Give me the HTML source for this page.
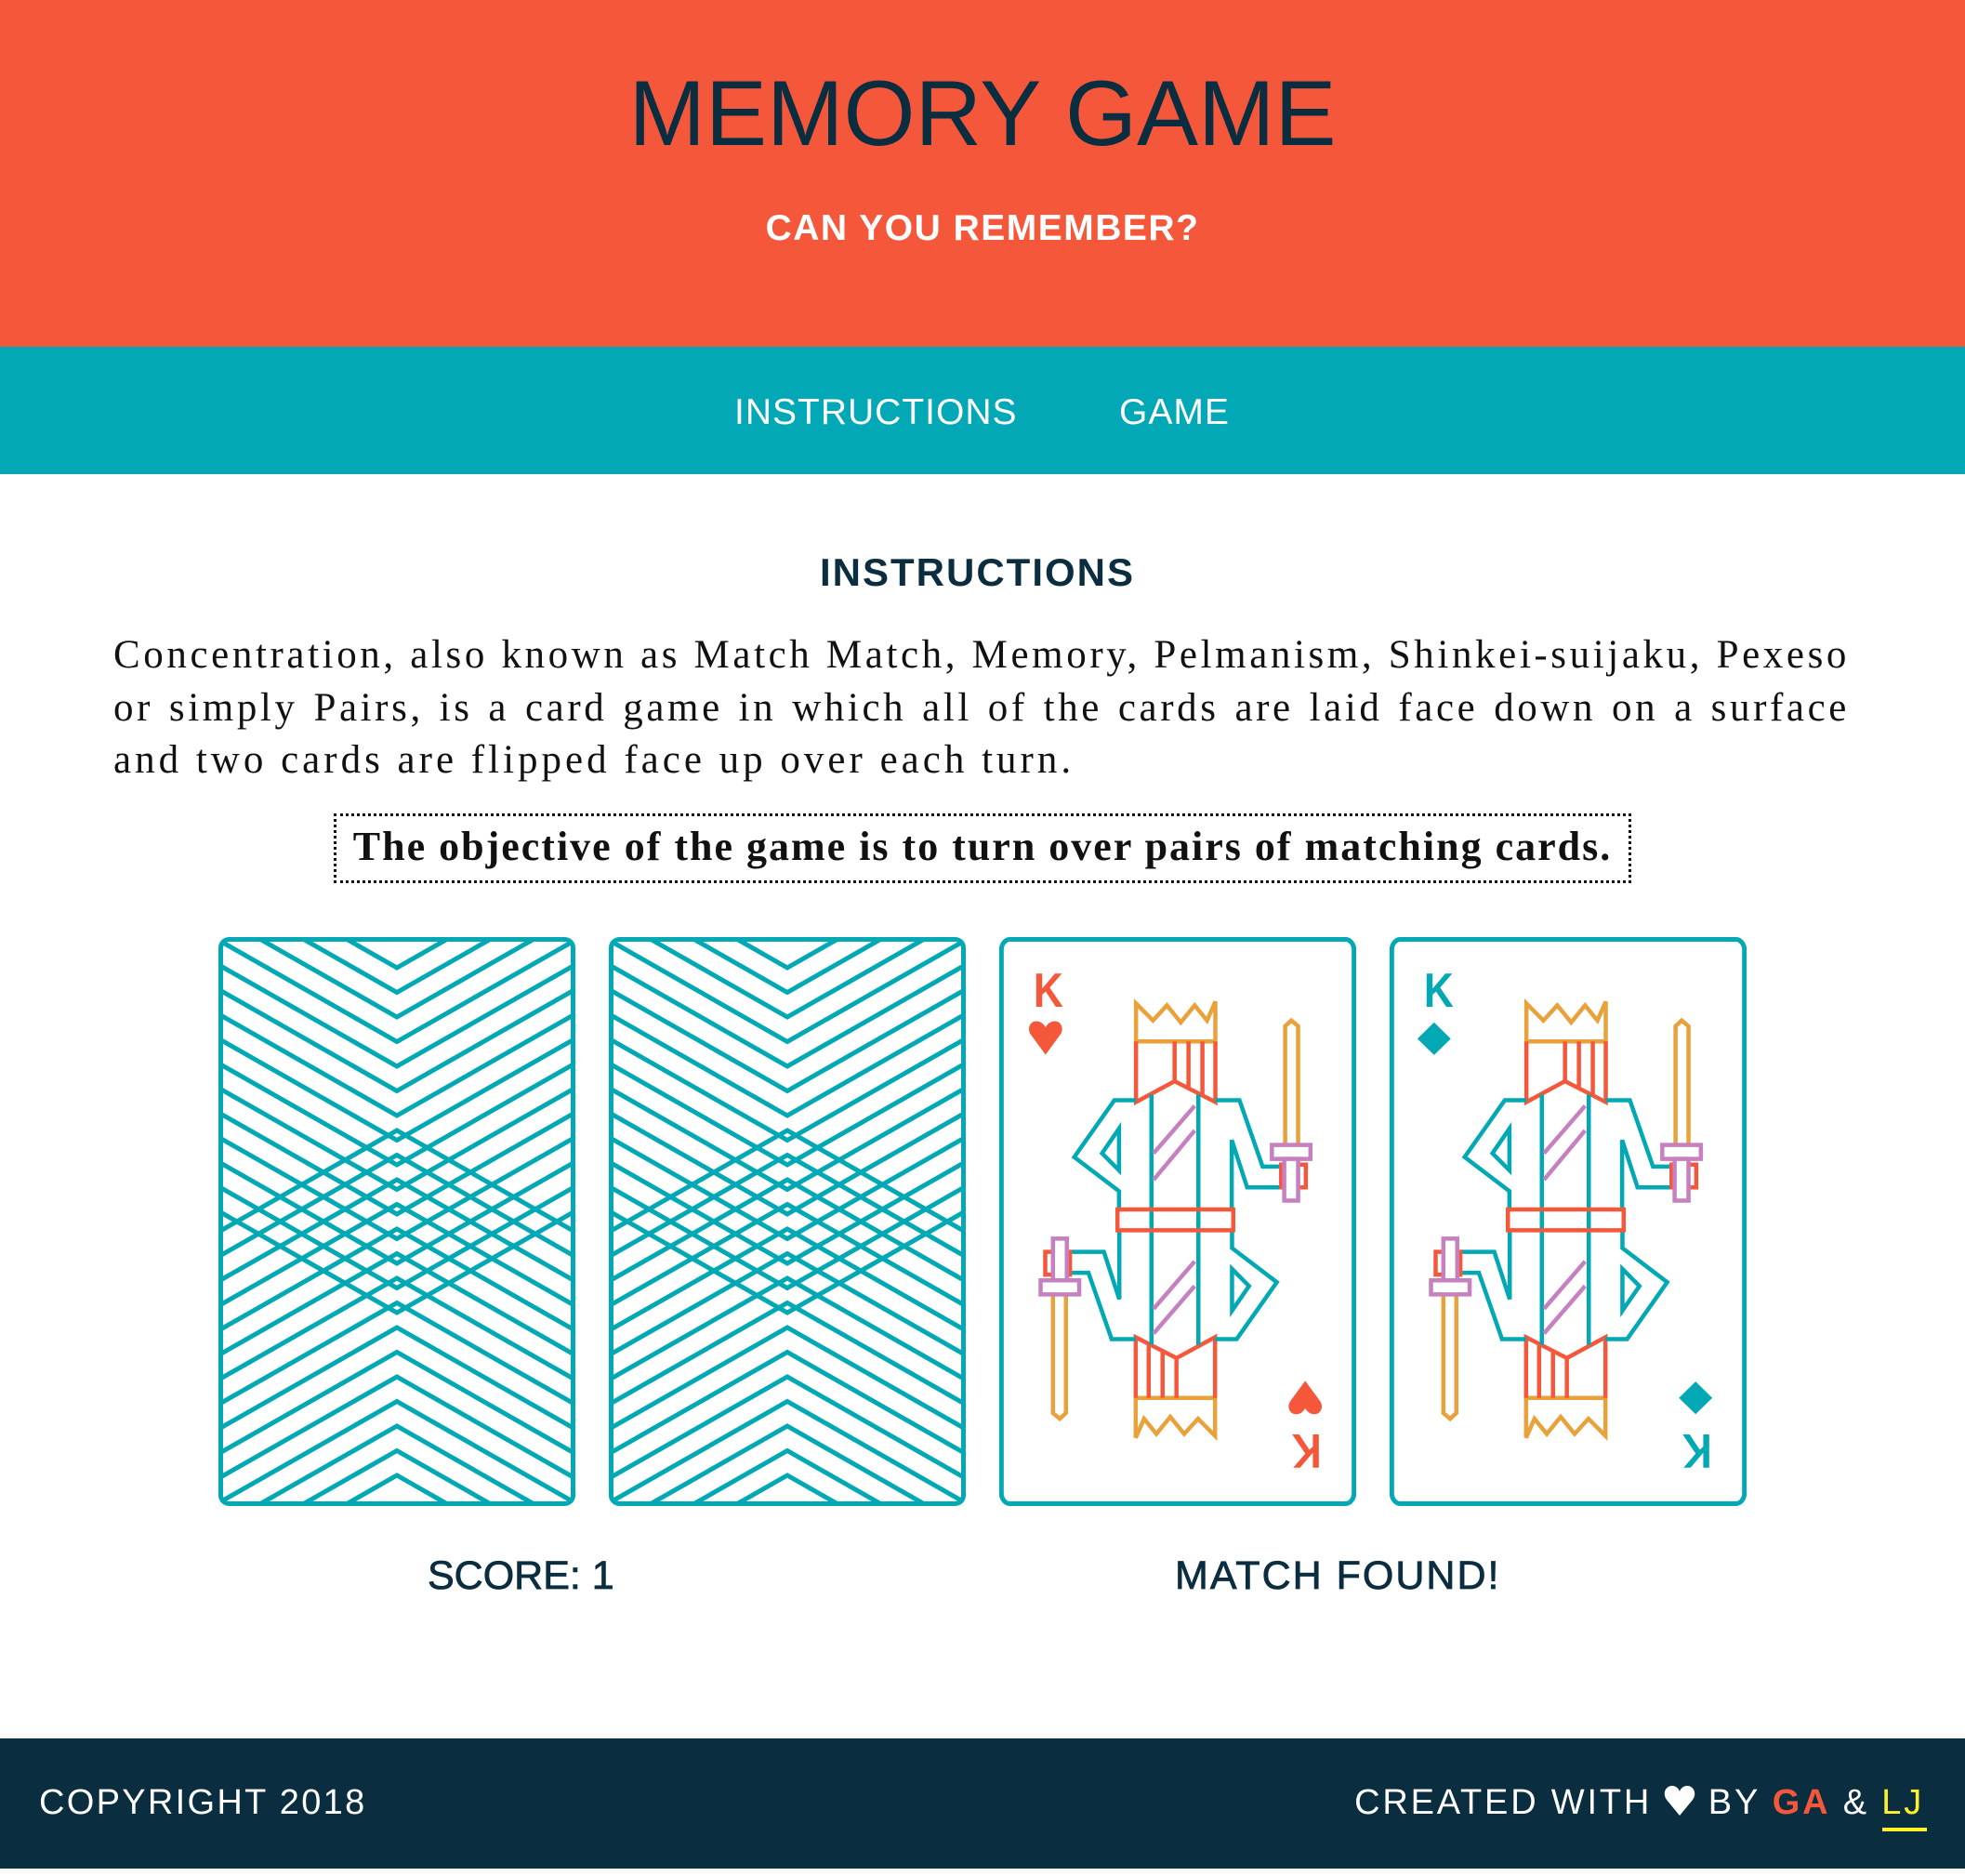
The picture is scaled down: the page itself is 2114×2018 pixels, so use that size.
<!DOCTYPE html>
<html><head><meta charset="utf-8">
<style>
*{margin:0;padding:0;box-sizing:border-box}
html,body{width:2114px;height:2018px;background:#fff;overflow:hidden;position:relative;font-family:"Liberation Sans",sans-serif}
.a{position:absolute;white-space:nowrap}
#hdr{position:absolute;left:0;top:0;width:2114px;height:373px;background:#f5573b}
#nav{position:absolute;left:0;top:373px;width:2114px;height:137px;background:#02a8b5}
#ftr{position:absolute;left:0;top:1870px;width:2114px;height:140px;background:#0b2d40}
.p{position:absolute;left:122px;width:1868px;font-family:"Liberation Serif",serif;font-size:43px;line-height:56.5px;letter-spacing:3.6px;color:#111;text-align:justify;text-align-last:justify;white-space:nowrap}
.card{position:absolute;top:1008px;width:384px;height:612px}
.card svg{position:absolute;left:0;top:0}
.k{position:absolute;font-family:"Liberation Sans",sans-serif;font-weight:bold;font-size:52px;line-height:52px;transform-origin:center;}
</style></head><body>
<div id="hdr"></div>
<div id="nav"></div>
<div class="a" style="left:0;width:2114px;text-align:center;top:72px;font-size:99px;line-height:99px;color:#0b2d40">MEMORY GAME</div>
<div class="a" style="left:0;width:2114px;text-align:center;top:226px;font-size:39px;line-height:39px;font-weight:bold;letter-spacing:1.5px;color:#fff">CAN YOU REMEMBER?</div>
<div class="a" style="left:790px;top:424px;font-size:39px;line-height:39px;letter-spacing:1px;color:#fff">INSTRUCTIONS</div>
<div class="a" style="left:1204px;top:424px;font-size:39px;line-height:39px;letter-spacing:1px;color:#fff">GAME</div>

<div class="a" style="left:882px;top:595px;font-size:42px;line-height:42px;font-weight:bold;letter-spacing:2px;color:#0b2d40">INSTRUCTIONS</div>

<div class="p" style="top:677px">Concentration, also known as Match Match, Memory, Pelmanism, Shinkei-suijaku, Pexeso</div>
<div class="p" style="top:733.5px">or simply Pairs, is a card game in which all of the cards are laid face down on a surface</div>
<div class="p" style="top:790px;text-align:left;text-align-last:left;letter-spacing:4px">and two cards are flipped face up over each turn.</div>

<div class="a" style="left:359px;top:875px;width:1396px;height:75px;border:3px dotted #111;font-family:'Liberation Serif',serif;font-weight:bold;font-size:44px;line-height:66px;letter-spacing:2px;text-align:center;color:#111">The objective of the game is to turn over pairs of matching cards.</div>

<svg width="0" height="0" style="position:absolute">
<defs>
<clipPath id="cc"><rect x="2.5" y="2.5" width="379" height="607" rx="9"/></clipPath>
<g id="back">
<g clip-path="url(#cc)" fill="none" stroke="#02a8b3" stroke-width="5">
<path d="M-10 -82L192 33L394 -82M-10 -55.5L192 59.5L394 -55.5M-10 -29L192 86L394 -29M-10 -2.5L192 112.5L394 -2.5M-10 24L192 139L394 24M-10 50.5L192 165.5L394 50.5M-10 77L192 192L394 77M-10 103.5L192 218.5L394 103.5M-10 130L192 245L394 130M-10 156.5L192 271.5L394 156.5M-10 183L192 298L394 183M-10 209.5L192 324.5L394 209.5M-10 236L192 351L394 236M-10 262.5L192 377.5L394 262.5M-10 289L192 404L394 289"/>
<path d="M-10 694L192 579L394 694M-10 667.5L192 552.5L394 667.5M-10 641L192 526L394 641M-10 614.5L192 499.5L394 614.5M-10 588L192 473L394 588M-10 561.5L192 446.5L394 561.5M-10 535L192 420L394 535M-10 508.5L192 393.5L394 508.5M-10 482L192 367L394 482M-10 455.5L192 340.5L394 455.5M-10 429L192 314L394 429M-10 402.5L192 287.5L394 402.5M-10 376L192 261L394 376M-10 349.5L192 234.5L394 349.5M-10 323L192 208L394 323"/>
</g>
<rect x="2.5" y="2.5" width="379" height="607" rx="9" fill="none" stroke="#02a8b3" stroke-width="5"/>
</g>
<g id="half" fill="none" stroke-width="4.5">
<polygon points="455,295 455,195 510,240 555,200 600,245 645,200 685,240 712,190 712,295" stroke="#e9a13b" vector-effect="non-scaling-stroke"/>
<path d="M455 295V455L580 400L712 455V295M580 295V400M625 295V420M670 295V435" stroke="#f5573b" vector-effect="non-scaling-stroke"/>
<path d="M455 450H385L255 600L400 690V740M400 525L345 590L400 635ZM712 450H790L865 625H925M925 680H815L765 555V740" stroke="#02a8b3" vector-effect="non-scaling-stroke"/>
<path d="M938 565V255L958 240L980 255V565" stroke="#e9a13b" vector-effect="non-scaling-stroke"/>
<rect x="925" y="620" width="80" height="60" stroke="#f5573b" vector-effect="non-scaling-stroke"/>
<rect x="895" y="568" width="125" height="37" stroke="#c67fbf" fill="#fff" vector-effect="non-scaling-stroke"/>
<rect x="935" y="605" width="45" height="110" stroke="#c67fbf" fill="#fff" vector-effect="non-scaling-stroke"/>
</g>
<g id="king">
<rect x="19" y="26" width="1142" height="1488" rx="28" fill="#fff" stroke="#02a8b3" stroke-width="5" vector-effect="non-scaling-stroke"/>
<use href="#half"/>
<use href="#half" transform="rotate(180 583 765)"/>
<g fill="none" stroke-width="4.5">
<path d="M505 435V1095M657 435V1095" stroke="#02a8b3" vector-effect="non-scaling-stroke"/>
<path d="M512 590L645 465M512 660L645 530M512 1000L645 875M512 1065L645 940" stroke="#c67fbf" vector-effect="non-scaling-stroke"/>
<rect x="395" y="738" width="375" height="55" stroke="#f5573b" vector-effect="non-scaling-stroke"/>
</g>
</g>
</defs></svg>

<div class="card" style="left:235px"><svg width="384" height="612" viewBox="0 0 384 612"><use href="#back"/></svg></div>
<div class="card" style="left:655px"><svg width="384" height="612" viewBox="0 0 384 612"><use href="#back"/></svg></div>

<div class="card" style="left:1075px">
<svg width="384" height="612" viewBox="12 20 1156 1500" preserveAspectRatio="none">
<use href="#king"/>
<path d="M162 330L115 278C100 262 112 240 135 242C150 243 158 252 162 258C166 252 174 243 189 242C212 240 224 262 209 278Z" fill="#f5573b"/>
<path d="M162 330L115 278C100 262 112 240 135 242C150 243 158 252 162 258C166 252 174 243 189 242C212 240 224 262 209 278Z" fill="#f5573b" transform="translate(1003 1235) rotate(180) translate(-162 -285)"/>
</svg>
<div class="k" style="left:34px;top:32px;color:#f5573b;transform:scaleX(0.85)">K</div>
<div class="k" style="left:312px;top:526px;color:#f5573b;transform:rotate(180deg) scaleX(0.85)">K</div>
</div>

<div class="card" style="left:1495px">
<svg width="384" height="612" viewBox="12 20 1156 1500" preserveAspectRatio="none">
<use href="#king"/>
<polygon points="156,245 210,288 156,331 102,288" fill="#02a8b3"/>
<polygon points="1003,1192 1057,1235 1003,1278 949,1235" fill="#02a8b3"/>
</svg>
<div class="k" style="left:34px;top:32px;color:#02a8b3;transform:scaleX(0.85)">K</div>
<div class="k" style="left:312px;top:526px;color:#02a8b3;transform:rotate(180deg) scaleX(0.85)">K</div>
</div>

<div class="a" style="left:460px;top:1674px;font-size:43px;line-height:43px;color:#0b2d40;-webkit-text-stroke:0.8px #0b2d40">SCORE: 1</div>
<div class="a" style="left:1264px;top:1674px;font-size:43px;line-height:43px;letter-spacing:2px;color:#0b2d40;-webkit-text-stroke:0.8px #0b2d40">MATCH FOUND!</div>

<div id="ftr"></div>
<div class="a" style="left:42px;top:1920px;font-size:38px;line-height:38px;letter-spacing:2.3px;color:#fff">COPYRIGHT 2018</div>
<div class="a" style="right:44px;top:1920px;font-size:38px;line-height:38px;letter-spacing:2.8px;color:#fff">CREATED WITH <svg width="34" height="32" viewBox="0 0 34 32" style="vertical-align:-2px"><path d="M17 32L3 15C-2 8 2 0 9 0C13 0 16 3 17 6C18 3 21 0 25 0C32 0 36 8 31 15Z" fill="#fff"/></svg> BY <b style="color:#f5573b">GA</b> &amp; <span style="color:#fff22d">LJ</span></div>
<div class="a" style="left:2025px;top:1966px;width:48px;height:4px;background:#fff22d"></div>
</body></html>
